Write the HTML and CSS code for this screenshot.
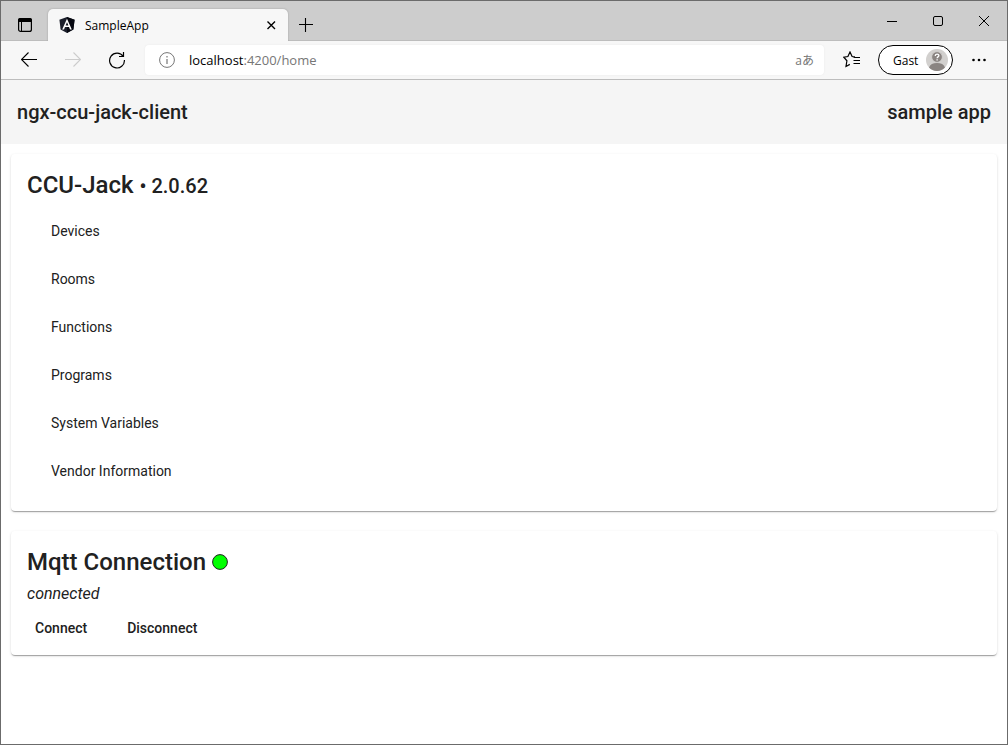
FILE: index.html
```html
<!DOCTYPE html>
<html lang="en">
<head>
<meta charset="utf-8">
<meta name="viewport" content="width=device-width, initial-scale=1">
<title>SampleApp</title>
<link rel="stylesheet" href="styles.css">
</head>
<body>
<div class="window">
  <header class="tabstrip">
    <button class="icon-btn tab-actions" aria-label="Tab actions">
      <svg width="16" height="16" viewBox="0 0 16 16"><rect x="1.6" y="1.6" width="12.8" height="12.8" rx="2" fill="none" stroke="#000" stroke-width="1.2"/><path d="M1 5V3a2 2 0 0 1 2-2h10a2 2 0 0 1 2 2v2z"/><path d="M4.5 5v9.5" stroke="#000"/></svg>
    </button>
    <div class="tab">
      <svg width="16" height="16" viewBox="0 0 16 16"><path fill="#1b1f2b" d="M8 0l7.600 2.700-1.200 9.800L8 16l-6.400-3.500L.4 2.700z"/><path fill="#060810" d="M8 0l7.600 2.700-1.200 9.800L8 16z"/><path fill="#fff" fill-rule="evenodd" d="M8 1.800l4.800 10.600H11l-1-2.400H6l-1 2.400H3.200zM8 5.200L6.600 8.600h2.800z"/></svg>
      <span class="tab-title">SampleApp</span>
      <button class="icon-btn" aria-label="Close tab">
        <svg width="10" height="10" viewBox="0 0 10 10"><path d="M1.500 1.500l7.500 7.500M9 1.500L1.500 9" stroke="#000" stroke-width="1.400"/></svg>
      </button>
    </div>
    <button class="icon-btn new-tab" aria-label="New tab">
      <svg width="14" height="14" viewBox="0 0 14 14"><path d="M0 6.500h14M6.500 0v14" stroke="#000" stroke-width="1.100"/></svg>
    </button>
    <div class="window-controls">
      <button class="icon-btn" aria-label="Minimize"><svg width="10" height="10" viewBox="0 0 10 10"><path d="M0 5.500h10" stroke="#000"/></svg></button>
      <button class="icon-btn" aria-label="Maximize"><svg width="10" height="10" viewBox="0 0 10 10"><rect x=".5" y=".5" width="9" height="9" rx="1.500" fill="none" stroke="#000"/></svg></button>
      <button class="icon-btn" aria-label="Close"><svg width="10" height="10" viewBox="0 0 10 10"><path d="M0 0l10 10M10 0L0 10" stroke="#000"/></svg></button>
    </div>
  </header>

  <nav class="navbar" aria-label="Browser">
    <div class="nav-buttons">
      <button class="icon-btn" aria-label="Back"><svg width="16" height="16" viewBox="0 0 16 16"><path d="M16 7.500H.8M7.500 .5l-7 7 7 7" fill="none" stroke="#000" stroke-width="1.100"/></svg></button>
      <button class="icon-btn" aria-label="Forward" disabled><svg width="16" height="16" viewBox="0 0 16 16"><path d="M0 7.500h15.200M8.500 .5l7 7-7 7" fill="none" stroke="#ccc" stroke-width="1.100"/></svg></button>
      <button class="icon-btn" aria-label="Refresh"><svg width="18" height="18" viewBox="0 0 18 18"><path d="M15.200 5.500A7.400 7.400 0 1 0 16.400 9M15.500 1v4.500H11" fill="none" stroke="#000" stroke-width="1.200"/></svg></button>
    </div>
    <div class="address">
      <svg width="16" height="16" viewBox="0 0 16 16"><circle cx="8" cy="8" r="7.400" fill="none" stroke="#767676"/><path d="M8 7v5M8 4v1.500" stroke="#767676" stroke-width="1.200"/></svg>
      <span class="url"><span class="host">localhost</span>:4200/home</span>
      <button class="translate" aria-label="Translate">aあ</button>
    </div>
    <button class="icon-btn favorites" aria-label="Favorites"><svg width="18" height="18" viewBox="0 0 18 18"><path d="M12 5.800l-2.900-.3L7 1 4.900 5.500.8 6.200l3.100 3.600-.9 5.700 3.800-2.100M10.500 6.500H17M10.500 9.500H17M10.500 12.500H17" fill="none" stroke="#000" stroke-width="1.200"/></svg></button>
    <button class="profile"><span>Gast</span>
      <svg width="22" height="22" viewBox="0 0 22 22"><circle cx="11" cy="11" r="11" fill="#d2d0ce"/><path fill="#8a8481" d="M3 18.600C4 15.400 7 14 11 14s7 1.400 8 4.600A11 11 0 0 1 11 22a11 11 0 0 1-8-3.400z"/><circle cx="11" cy="8" r="5.400" fill="#8a8481" stroke="#d2d0ce"/><path d="M9.200 6.900c0-2.500 3.700-2.300 3.700-.3 0 1.300-1.800 1.300-1.800 2.600M11.100 10.200v1.300" fill="none" stroke="#fff" stroke-width="1.300"/></svg>
    </button>
    <button class="icon-btn more" aria-label="Settings and more"><svg width="14" height="4" viewBox="0 0 14 4"><circle cx="1.500" cy="2" r="1.300"/><circle cx="7" cy="2" r="1.300"/><circle cx="12.500" cy="2" r="1.300"/></svg></button>
  </nav>

  <div class="page">
    <header class="app-bar"><span>ngx-ccu-jack-client</span><span>sample app</span></header>
    <main class="cards">
      <section class="card">
        <h1 class="card-title">CCU-Jack <small>• 2.0.62</small></h1>
        <ul class="menu">
          <li><a href="#devices">Devices</a></li>
          <li><a href="#rooms">Rooms</a></li>
          <li><a href="#functions">Functions</a></li>
          <li><a href="#programs">Programs</a></li>
          <li><a href="#variables">System Variables</a></li>
          <li><a href="#vendor">Vendor Information</a></li>
        </ul>
      </section>
      <section class="card card-mqtt">
        <h1 class="card-title">Mqtt Connection <svg class="status" width="16" height="16" viewBox="0 0 16 16"><circle cx="8" cy="8" r="7.400" fill="#0f0" stroke="#222"/></svg></h1>
        <p class="state">connected</p>
        <div class="actions"><button>Connect</button><button>Disconnect</button></div>
      </section>
    </main>
  </div>
</div>
</body>
</html>
```
FILE: styles.css
```css
* {
  box-sizing: border-box;
}

body {
  margin: 0;
  font-family: Roboto, sans-serif;
  color: #212121;
}

button {
  padding: 0;
  border: 0;
  background: none;
  color: inherit;
  font: inherit;
}

svg {
  display: block;
  flex: none;
}

.window {
  display: flex;
  flex-direction: column;
  min-height: 100vh;
  border: 1px solid #6b6b6b;
  background: #fff;
}

.icon-btn {
  display: flex;
  align-items: center;
  justify-content: center;
}

/* Browser chrome */
.tabstrip {
  display: flex;
  align-items: stretch;
  height: 40px;
  background: #cdcdcd;
  box-shadow: inset 0 -1px #bdbdbd;
  font-family: "Open Sans", sans-serif;
}

.tab-actions {
  width: 47px;
  padding-top: 8px;
}

.tab {
  display: flex;
  align-items: center;
  width: 240px;
  margin-top: 8px;
  padding: 0 12px 0 11px;
  border-radius: 5px 5px 0 0;
  background: #f7f7f7;
  box-shadow: 0 0 2px #999;
  clip-path: inset(-3px -3px 0);
  font-size: 12px;
  color: #000;
}

.tab-title {
  flex: 1;
  margin-left: 10px;
}

.new-tab {
  width: 35px;
  padding-top: 8px;
}

.window-controls {
  display: flex;
  margin-left: auto;
}

.window-controls button {
  width: 46px;
}

.navbar {
  display: flex;
  align-items: center;
  height: 39px;
  border-bottom: 1px solid #bdbdbd;
  background: #f7f7f7;
  font-family: "Open Sans", "Noto Sans CJK JP", sans-serif;
}

.nav-buttons {
  display: flex;
  padding: 0 6px;
}

.nav-buttons button {
  width: 44px;
  height: 30px;
}

.address {
  display: flex;
  flex: 1;
  align-items: center;
  height: 30px;
  padding: 0 10px 0 14px;
  border-radius: 4px;
  background: #fff;
  box-shadow: 0 0 2px #e8e8e8;
  font-size: 13px;
  color: #767676;
}

.url {
  flex: 1;
  margin-left: 14px;
}

.host {
  color: #000;
}

.translate {
  font-size: 12px;
}

.favorites {
  width: 54px;
  height: 30px;
  padding-left: 2px;
}

.profile {
  display: flex;
  align-items: center;
  justify-content: space-between;
  width: 75px;
  height: 30px;
  padding: 0 4px 0 14px;
  border: 1px solid #000;
  border-radius: 15px;
  background: #fff;
  color: #000;
  font-size: 12px;
}

.more {
  width: 54px;
  height: 30px;
  padding-right: 2px;
}

/* Application */
.page {
  flex: 1;
}

.app-bar {
  display: flex;
  align-items: center;
  justify-content: space-between;
  height: 64px;
  padding: 0 16px;
  background: #f5f5f5;
  font-size: 20px;
  font-weight: 500;
}

.cards {
  display: flex;
  flex-direction: column;
  gap: 20px;
  padding: 10px;
}

.card {
  padding: 16px;
  border-radius: 4px;
  background: #fff;
  box-shadow: 0 2px 1px -1px rgba(0, 0, 0, 0.2), 0 1px 1px rgba(0, 0, 0, 0.14), 0 1px 3px rgba(0, 0, 0, 0.12);
}

.card-mqtt {
  padding-bottom: 10px;
}

.card-title {
  margin: 0;
  font-size: 24px;
  font-weight: 500;
  line-height: 30px;
}

.card-title small {
  font-size: 20px;
}

.menu {
  margin: 6px 0 0;
  padding: 0;
  list-style: none;
}

.menu a {
  display: block;
  padding: 0 24px;
  color: inherit;
  font-size: 14px;
  line-height: 48px;
  text-decoration: none;
}

.status {
  display: inline-block;
  vertical-align: 0;
}

.state {
  margin: 0;
  font-size: 16px;
  font-style: italic;
  line-height: 34px;
}

.actions {
  display: flex;
  gap: 24px;
}

.actions button {
  height: 34px;
  padding: 0 8px;
  font-size: 14px;
  font-weight: 500;
}
```
